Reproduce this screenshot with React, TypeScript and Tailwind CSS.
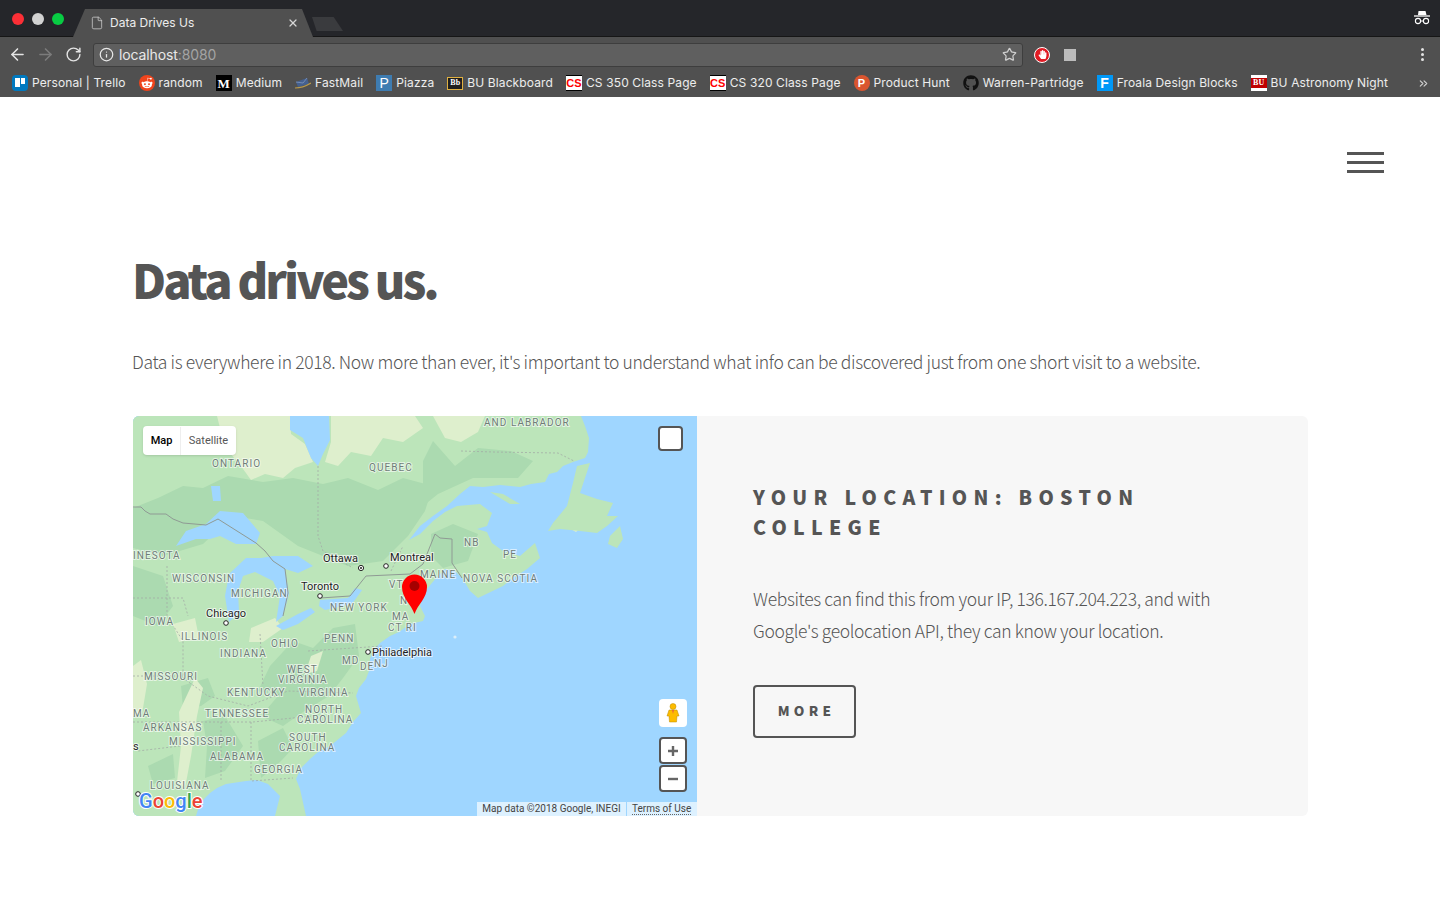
import { ArrowLeft, ArrowRight, RotateCw, Info, Star, X, File, ChevronsRight } from 'lucide-react';
import { FaGithub, FaHandPaper, FaRedditAlien } from 'react-icons/fa';
import type { ReactNode } from 'react';

const csIcon = (
  <span className="w-4 h-4 bg-white border-y border-black flex items-center justify-center text-[#ff0000] text-[11px] font-bold leading-none font-['Liberation_Sans',sans-serif]">
    CS
  </span>
);

const bookmarks: { label: string; icon: ReactNode }[] = [
  {
    label: 'Personal | Trello',
    icon: (
      <span className="w-4 h-4 rounded-sm bg-[#0079bf] flex gap-px p-[3px] items-start">
        <span className="w-[5px] h-[9px] bg-white" />
        <span className="w-[4px] h-[6px] bg-white" />
      </span>
    ),
  },
  {
    label: 'random',
    icon: (
      <span className="w-4 h-4 rounded-full bg-[#f0441c] flex items-center justify-center text-white">
        <FaRedditAlien size={12} />
      </span>
    ),
  },
  {
    label: 'Medium',
    icon: (
      <span className="w-4 h-4 bg-black flex items-center justify-center text-white text-[13px] font-bold leading-none font-['Liberation_Serif',serif]">
        M
      </span>
    ),
  },
  {
    label: 'FastMail',
    icon: (
      <svg width="16" height="16" viewBox="0 0 16 16">
        <path d="M1 7 L12 3 L14 9 L3 12 Z" fill="#44608f" />
        <path d="M1 7 L8 8 L12 3" fill="none" stroke="#7f95bb" strokeWidth="0.8" />
        <path d="M0 13 C5 13 11 11 16 8" fill="none" stroke="#b99a4a" strokeWidth="1.2" />
      </svg>
    ),
  },
  {
    label: 'Piazza',
    icon: (
      <span className="w-4 h-4 bg-[#3e7cb1] flex items-center justify-center text-white text-[14px] leading-none font-['Liberation_Sans',sans-serif]">
        P
      </span>
    ),
  },
  {
    label: 'BU Blackboard',
    icon: (
      <span className="w-4 h-[13px] bg-[#1f1f1f] border border-[#e0b040] flex items-center justify-center text-white text-[8px] font-bold leading-none font-['Liberation_Serif',serif]">
        Bb
      </span>
    ),
  },
  { label: 'CS 350 Class Page', icon: csIcon },
  { label: 'CS 320 Class Page', icon: csIcon },
  {
    label: 'Product Hunt',
    icon: (
      <span className="w-4 h-4 rounded-full bg-[#da552f] flex items-center justify-center text-white text-[11px] font-bold leading-none font-['Liberation_Sans',sans-serif]">
        P
      </span>
    ),
  },
  { label: 'Warren-Partridge', icon: <FaGithub size={16} className="text-[#111]" /> },
  {
    label: 'Froala Design Blocks',
    icon: (
      <span className="w-4 h-4 bg-[#0098f7] flex items-center justify-center text-white text-[14px] font-bold leading-none font-['Liberation_Sans',sans-serif]">
        F
      </span>
    ),
  },
  {
    label: 'BU Astronomy Night',
    icon: (
      <span className="w-4 h-4 bg-white flex items-center">
        <span className="w-4 h-[10px] bg-[#c00000] flex items-center justify-center text-white text-[8px] font-bold leading-none font-['Liberation_Serif',serif]">
          BU
        </span>
      </span>
    ),
  },
];

const regionLabels: [string, number, number][] = [
  ['ONTARIO', 79, 51],
  ['QUEBEC', 236, 55],
  ['AND LABRADOR', 351, 10],
  ['INESOTA', 0, 143],
  ['WISCONSIN', 39, 166],
  ['MICHIGAN', 98, 181],
  ['NEW YORK', 197, 195],
  ['IOWA', 12, 209],
  ['ILLINOIS', 48, 224],
  ['OHIO', 138, 231],
  ['PENN', 191, 226],
  ['INDIANA', 87, 241],
  ['MD', 209, 248],
  ['DE', 227, 254],
  ['NJ', 241, 251],
  ['WEST', 154, 257],
  ['VIRGINIA', 145, 267],
  ['MISSOURI', 11, 264],
  ['KENTUCKY', 94, 280],
  ['VIRGINIA', 166, 280],
  ['NORTH', 172, 297],
  ['CAROLINA', 164, 307],
  ['TENNESSEE', 72, 301],
  ['MA', 0, 301],
  ['ARKANSAS', 10, 315],
  ['SOUTH', 156, 325],
  ['CAROLINA', 146, 335],
  ['MISSISSIPPI', 36, 329],
  ['ALABAMA', 77, 344],
  ['GEORGIA', 121, 357],
  ['LOUISIANA', 17, 373],
  ['MA', 259, 204],
  ['CT RI', 255, 215],
  ['VT', 256, 172],
  ['N', 267, 188],
  ['MAINE', 287, 162],
  ['NOVA SCOTIA', 330, 166],
  ['NB', 331, 130],
  ['PE', 370, 142],
];

const cityLabels: [string, number, number][] = [
  ['Ottawa', 190, 146],
  ['Montreal', 257, 145],
  ['Toronto', 168, 174],
  ['Chicago', 73, 201],
  ['Philadelphia', 239, 240],
  ['s', 0, 334],
];

// mid green forest belts
const darkPatches = [
  'M0 92 L25 82 L50 70 L70 72 L95 60 L130 66 L160 62 L190 68 L215 62 L245 74 L270 62 L300 70 L292 95 L275 120 L250 145 L215 150 L190 140 L165 130 L130 105 L100 100 L70 128 L30 140 L0 132 Z',
  'M0 150 L30 160 L40 190 L25 210 L0 200 Z',
  'M137 250 L160 225 L180 232 L200 212 L222 208 L226 240 L210 262 L196 280 L170 296 L150 310 L128 300 L145 280 L125 275 Z',
  'M48 270 L75 262 L82 280 L68 290 L50 292 Z',
  'M70 305 L92 300 L110 330 L92 355 L72 362 L74 330 Z',
  'M125 325 L150 312 L160 332 L148 345 L128 362 Z',
  'M15 350 L40 338 L42 362 L20 368 Z',
  'M290 45 L300 25 L322 50 L345 32 L378 35 L400 45 L385 62 L340 62 L305 78 L290 90 Z',
  'M298 118 L320 108 L345 118 L335 145 L310 152 L298 140 Z',
];

// pale tundra and farmland
const lightPatches = [
  'M84 0 L157 0 L158 18 L172 28 L180 46 L162 52 L150 62 L132 58 L118 64 L105 46 L92 32 Z',
  'M198 0 L282 0 L290 12 L270 26 L250 22 L238 40 L218 36 L205 50 L192 46 L198 26 Z',
  'M300 0 L352 0 L345 16 L328 26 L312 22 Z',
  'M0 250 L8 244 L14 268 L9 298 L0 300 Z',
  'M46 296 L62 262 L70 272 L64 300 L58 340 L52 372 L44 366 L48 330 Z',
  'M118 212 L142 202 L150 212 L130 226 L116 226 Z',
  'M178 240 L190 235 L184 255 L172 258 Z',
  'M436 112 L447 96 L452 108 L443 116 Z',
  'M40 208 L62 202 L66 222 L46 226 Z',
];

const GoogleMap = () => (
  <div className="relative w-[564px] h-full shrink-0 overflow-hidden rounded-l-md bg-[#9fd6ff]">
    <svg width="564" height="400" viewBox="0 0 564 400" className="block font-['Roboto',sans-serif]">
      <rect width="564" height="400" fill="#9fd6ff" />
      {/* mainland */}
      <path
        d="M0 0 L448 0 L452 10 L456 22 L455 36 L452 42 L440 46 L430 50 L424 56 L416 58 L412 66 L398 68 L387 71 L367 69 L350 71 L337 70 L327 78 L314 90 L300 100 L287 110 L276 124 L287 118 L300 105 L312 96 L324 90 L347 88 L359 97 L354 110 L344 113 L354 116 L359 127 L370 135 L387 140 L402 127 L407 142 L394 153 L380 162 L370 170 L345 182 L337 175 L330 163 L322 155 L312 153 L305 160 L298 168 L290 178 L287 190 L292 200 L290 205 L277 208 L266 216 L257 220 L247 227 L240 235 L237 243 L236 255 L233 263 L226 272 L223 280 L228 297 L220 306 L213 317 L197 330 L185 336 L177 343 L168 352 L163 363 L167 373 L173 400 L142 400 L147 380 L135 368 L124 364 L113 365 L93 368 L84 372 L77 377 L67 387 L63 400 L0 400 Z"
        fill="#bce5ba"
      />
      {darkPatches.map((d) => (
        <path key={d} d={d} fill="#abdab0" />
      ))}
      {lightPatches.map((d) => (
        <path key={d} d={d} fill="#deefcd" />
      ))}
      {/* Newfoundland and the islands */}
      <path
        d="M415 115 L420 107 L434 90 L440 67 L444 50 L457 47 L447 77 L464 83 L480 87 L474 100 L485 100 L474 110 L464 117 L447 115 L427 113 Z"
        fill="#bce5ba"
      />
      <path d="M477 120 L487 110 L490 123 L484 132 L475 128 Z" fill="#bce5ba" />
      <path d="M357 76 L370 78 L387 88 L377 88 Z" fill="#bce5ba" />
      {/* water */}
      <path d="M157 0 L196 0 L197 24 L190 38 L185 50 L178 42 L170 22 L157 14 Z" fill="#9fd6ff" />
      <path d="M43 130 L53 115 L73 108 L87 95 L110 97 L127 117 L123 128 L103 128 L87 120 L77 123 L63 123 Z" fill="#9fd6ff" />
      <path d="M96 158 L113 142 L128 142 L140 140 L165 140 L180 150 L165 157 L152 153 L156 178 L150 200 L143 206 L147 180 L140 165 L122 156 L110 160 L105 175 L106 196 L96 206 L92 180 Z" fill="#9fd6ff" />
      <path d="M187 184 L215 182 L222 172 L229 174 L219 188 L192 194 L186 190 Z" fill="#9fd6ff" />
      <path d="M143 210 L165 198 L178 192 L182 196 L165 208 L150 214 Z" fill="#9fd6ff" />
      <path d="M78 70 L87 70 L88 85 L80 85 Z" fill="#9fd6ff" />
      {/* borders */}
      <path
        d="M0 91 L8 91 L12 95 L17 98 L33 98 L40 103 L50 107 L73 109 L85 103 L123 127 L132 135 L140 145 L152 153 L155 177 L150 200 M187 182 L217 180 L233 160 L277 158 L290 148 L302 118 L307 122 L319 123 L319 147 L329 162"
        fill="none"
        stroke="#8f9a94"
        strokeWidth="1"
      />
      <path
        d="M185 50 L185 120 L190 135 L220 152 M258 155 L270 130 M0 182 L50 182 L55 200 M34 150 L34 200 L50 225 L50 262 L75 280 L115 290 L155 275 L220 277 M0 260 L50 260 M0 306 L70 306 L120 306 L180 300 M88 306 L88 365 M118 306 L118 365 L160 362 M127 218 L130 270 M175 235 L250 230 M47 330 L5 335 M328 35 L360 36 L425 37 L441 45"
        fill="none"
        stroke="#a3aca6"
        strokeWidth="0.8"
        strokeDasharray="2 2"
      />
      {/* labels */}
      {regionLabels.map(([label, x, y]) => (
        <text
          key={label + x}
          x={x}
          y={y}
          fontSize="10"
          letterSpacing="1.05"
          fill="#6f7d78"
          stroke="#ffffff"
          strokeOpacity="0.6"
          strokeWidth="2"
          paintOrder="stroke"
        >
          {label}
        </text>
      ))}
      {cityLabels.map(([label, x, y]) => (
        <text key={label} x={x} y={y} fontSize="11" fill="#1f1f1f" stroke="#ffffff" strokeOpacity="0.7" strokeWidth="2" paintOrder="stroke">
          {label}
        </text>
      ))}
      <circle cx="228" cy="152" r="2.6" fill="#fff" stroke="#222" />
      <circle cx="228" cy="152" r="1" fill="#222" />
      <circle cx="253" cy="150" r="2.3" fill="#fff" stroke="#222" />
      <circle cx="187" cy="180" r="2.3" fill="#fff" stroke="#222" />
      <circle cx="93" cy="207" r="2.3" fill="#fff" stroke="#222" />
      <circle cx="235" cy="236" r="2.3" fill="#fff" stroke="#222" />
      <circle cx="5" cy="378" r="2.3" fill="#fff" stroke="#222" />
      <circle cx="322" cy="221" r="1.6" fill="#dceef8" />
      {/* pin */}
      <path
        d="M281.5 198 C278 188 269 182 269 171 a12.5 12.5 0 1 1 25 0 C294 182 285 188 281.5 198 Z"
        fill="#ff0000"
      />
      <circle cx="281.5" cy="170" r="5" fill="#a50000" />
      {/* logo */}
      <text x="6" y="392" fontSize="20" fontWeight="500" stroke="#ffffff" strokeWidth="2" paintOrder="stroke" fontFamily="'Roboto', sans-serif">
        <tspan fill="#4285f4">G</tspan>
        <tspan fill="#ea4335">o</tspan>
        <tspan fill="#fbbc05">o</tspan>
        <tspan fill="#4285f4">g</tspan>
        <tspan fill="#34a853">l</tspan>
        <tspan fill="#ea4335">e</tspan>
      </text>
    </svg>

    {/* map controls */}
    <div className="absolute left-[10px] top-[10px] w-[93px] h-[29px] pt-px bg-white rounded-sm shadow-sm flex items-center text-[11px] font-['Roboto',sans-serif]">
      <span className="w-[38px] h-full flex items-center justify-center text-black font-medium border-r border-[#eeeeee]">Map</span>
      <span className="flex-1 text-center text-[#565656]">Satellite</span>
    </div>
    <div className="absolute left-[525px] top-[10px] w-[25px] h-[25px] bg-white border-2 border-[#555] rounded" />
    <div className="absolute left-[526px] top-[283px] w-[28px] h-[28px] bg-white rounded-sm flex items-center justify-center">
      <svg width="14" height="20" viewBox="0 0 14 20">
        <circle cx="7" cy="3.5" r="3" fill="#fdbc00" stroke="#b98a00" strokeWidth="0.5" />
        <path d="M3 7 L11 7 L13 13 L11 13 L10.5 19 L3.5 19 L3 13 L1 13 Z" fill="#fdbc00" stroke="#b98a00" strokeWidth="0.5" />
        <path d="M6 7 L8 7 L7 11 Z" fill="#e8663c" />
      </svg>
    </div>
    <div className="absolute left-[526px] top-[321px] w-[28px] h-[27px] bg-white border-2 border-[#555] rounded flex items-center justify-center">
      <svg width="12" height="12" viewBox="0 0 12 12">
        <path d="M1 6 H11 M6 1 V11" stroke="#666" strokeWidth="2.4" />
      </svg>
    </div>
    <div className="absolute left-[526px] top-[349px] w-[28px] h-[27px] bg-white border-2 border-[#555] rounded flex items-center justify-center">
      <svg width="12" height="12" viewBox="0 0 12 12">
        <path d="M1 6 H11" stroke="#666" strokeWidth="2.4" />
      </svg>
    </div>
    <div className="absolute left-[344px] bottom-0 h-[14px] flex gap-px text-[10px] leading-[14px] text-[#444] font-['Roboto',sans-serif]">
      <span className="w-[149px] text-center bg-white/65 whitespace-nowrap">Map data ©2018 Google, INEGI</span>
      <span className="w-[70px] pl-[5px] bg-white/65 whitespace-nowrap">
        <span className="border-b border-dotted border-[#666]">Terms of Use</span>
      </span>
    </div>
  </div>
);

export default function App() {
  return (
    <div className="min-h-screen bg-white font-['Noto_Sans_CJK_SC',sans-serif] text-[#555]">
      {/* browser chrome */}
      <div className="h-[37px] bg-[#25262a] border-b border-[#161616] flex items-end relative">
        <div className="absolute left-[12px] top-[13px] flex gap-2">
          <span className="w-3 h-3 rounded-full bg-[#fc2f36]" />
          <span className="w-3 h-3 rounded-full bg-[#d2d2d2]" />
          <span className="w-3 h-3 rounded-full bg-[#08cc43]" />
        </div>
        <div className="ml-[73px] -mb-px w-[240px] h-[28px] bg-[#505050] [clip-path:polygon(0_100%,12px_0,calc(100%-11px)_0,100%_100%)] flex items-center pl-[17px] pr-[14px] pb-[1px] text-white/90 font-['Inter',sans-serif] text-[12px]">
          <File size={14} strokeWidth={1.25} className="text-[#d6d6d6] shrink-0" />
          <span className="ml-[6px] flex-1">Data Drives Us</span>
          <X size={12} strokeWidth={2.5} className="text-[#d6d6d6]" />
        </div>
        <div className="ml-[-1px] mb-[5px] w-[31px] h-[14px] bg-[#3a3b3e] [clip-path:polygon(0_0,70%_0,100%_100%,15%_100%)]" />
        <svg width="18" height="18" viewBox="0 0 18 18" className="absolute right-[9px] top-[9px]">
          <path d="M5.5 2 H12.5 L13.5 6 H5 Z" fill="#fff" />
          <path d="M1 7 H17" stroke="#fff" strokeWidth="1.3" />
          <circle cx="5" cy="12" r="2.6" fill="none" stroke="#fff" strokeWidth="1.1" />
          <circle cx="13" cy="12" r="2.6" fill="none" stroke="#fff" strokeWidth="1.1" />
          <path d="M7.6 12 H10.4" stroke="#fff" strokeWidth="1" />
        </svg>
      </div>
      <div className="h-[35px] bg-[#505050] flex items-center pl-[8px] pr-[16px] font-['Inter',sans-serif]">
        <ArrowLeft size={19} className="text-[#e4e4e4]" />
        <ArrowRight size={19} className="ml-[9px] text-[#7c7c7c]" />
        <RotateCw size={17} className="ml-[10px] text-[#e4e4e4]" />
        <div className="ml-[11px] w-[930px] h-[24px] rounded-[3px] bg-[#5f5f5f] border border-[#3e3e3e] flex items-center pl-[5px] pr-[5px]">
          <Info size={15} className="text-[#e8e8e8]" />
          <span className="ml-[5px] text-[14px] text-[#e8e8e8] tracking-[-0.12px]">
            localhost<span className="text-[#a4a4a4]">:8080</span>
          </span>
          <Star size={15} className="ml-auto text-[#cfcfcf]" />
        </div>
        <span className="ml-[11px] w-4 h-4 rounded-full bg-[#e01b24] border border-white flex items-center justify-center text-white">
          <FaHandPaper size={9} />
        </span>
        <span className="ml-[14px] w-[12px] h-[12px] bg-[#bcbcbc]" />
        <span className="ml-auto flex flex-col gap-[2px]">
          <span className="w-[3px] h-[3px] rounded-full bg-[#e4e4e4]" />
          <span className="w-[3px] h-[3px] rounded-full bg-[#e4e4e4]" />
          <span className="w-[3px] h-[3px] rounded-full bg-[#e4e4e4]" />
        </span>
      </div>
      <div className="h-[25px] bg-[#505050] flex items-center pl-[12px] pr-[10px] pb-[3px] gap-[13px] text-[12px] tracking-[0.12px] text-white/90 font-['Inter',sans-serif]">
        {bookmarks.map((b) => (
          <span key={b.label} className="flex items-center gap-[4px] whitespace-nowrap">
            {b.icon}
            {b.label}
          </span>
        ))}
        <ChevronsRight size={13} className="ml-auto text-[#d0d0d0]" />
      </div>

      {/* page */}
      <main className="px-[133px] relative">
        <button className="absolute right-[56px] top-[55px] flex flex-col gap-[6px]">
          <span className="w-[37px] h-[3px] bg-[#555]" />
          <span className="w-[37px] h-[3px] bg-[#555]" />
          <span className="w-[37px] h-[3px] bg-[#555]" />
        </button>
        <h1 className="pt-[152px] -ml-px text-[46.8px] leading-[60px] font-black tracking-[-2.95px]">Data drives us.</h1>
        <p className="mt-[37px] -ml-px text-[17.5px] leading-[32px] font-light tracking-[-0.35px] whitespace-nowrap">
          Data is everywhere in 2018. Now more than ever, it's important to understand what info can be discovered just from one short visit to a website.
        </p>
        <section className="mt-[38px] w-[1175px] h-[400px] rounded-md bg-[#f7f7f7] flex">
          <GoogleMap />
          <div className="pl-[56px] pr-[56px] pt-[66px]">
            <h3 className="text-[19.5px] leading-[30px] font-black tracking-[6.3px]">YOUR LOCATION: BOSTON COLLEGE</h3>
            <p className="mt-[41px] text-[17.5px] leading-[32px] font-light tracking-[-0.355px]">
              Websites can find this from your IP, 136.167.204.223, and with Google's geolocation API, they can know your location.
            </p>
            <button className="mt-[38px] w-[103px] h-[53px] pl-[4px] pb-[2px] border-2 border-[#555] rounded text-[13.5px] font-black tracking-[4.3px]">MORE</button>
          </div>
        </section>
      </main>
    </div>
  );
}
